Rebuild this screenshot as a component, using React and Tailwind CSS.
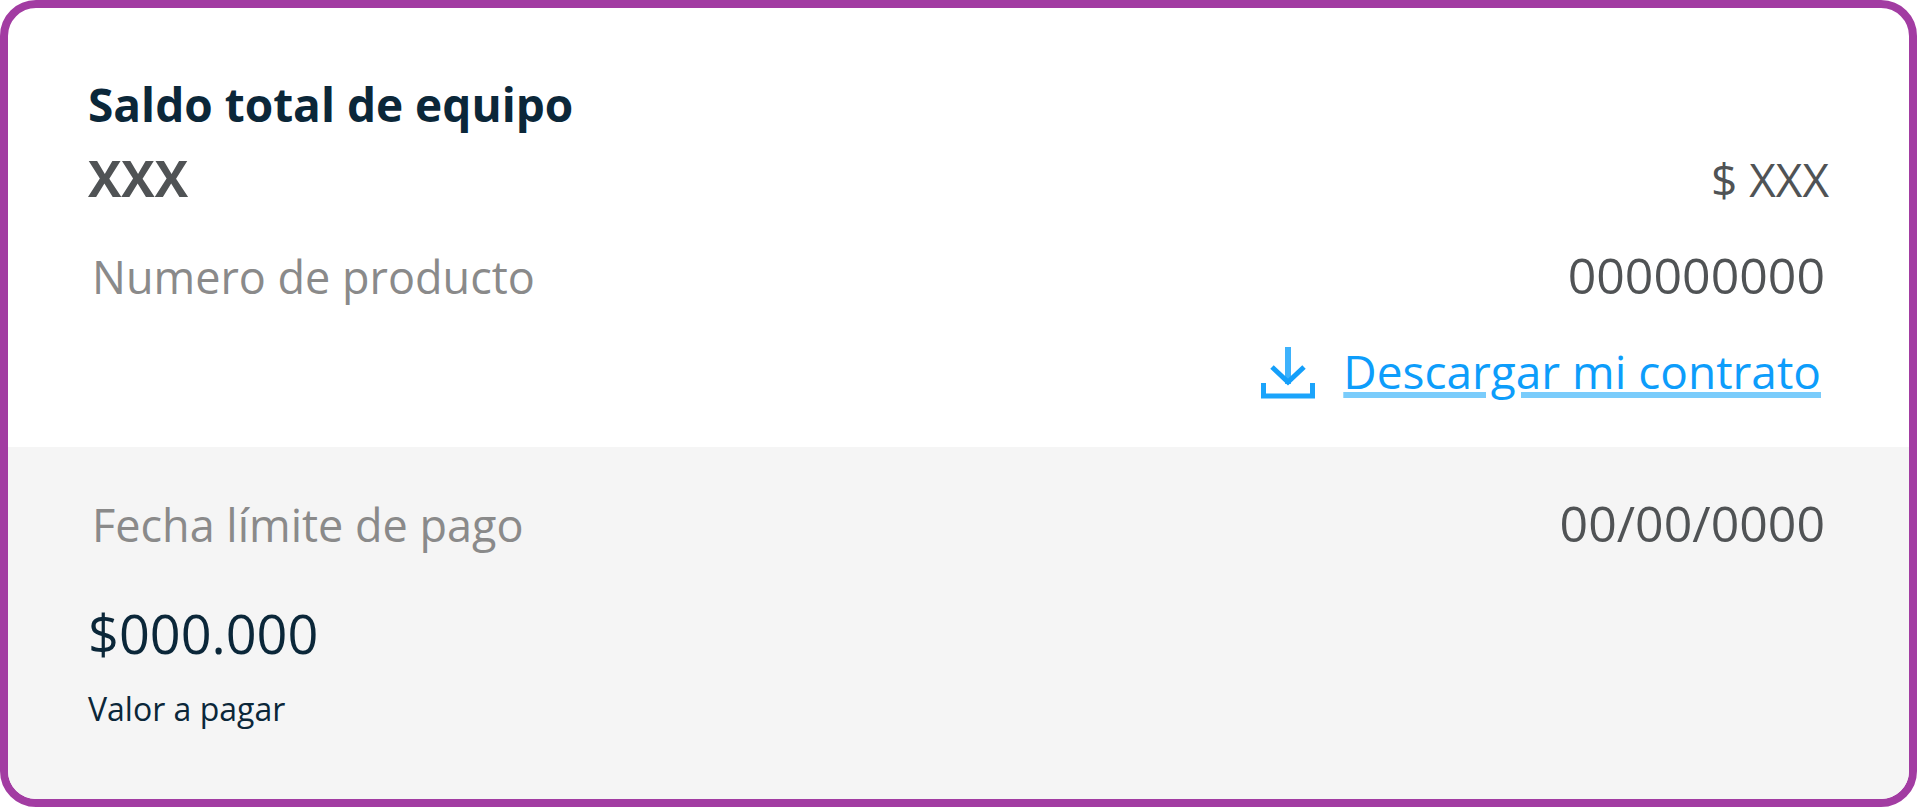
function DownloadIcon() {
  return (
    <svg viewBox="0 0 54 60" fill="none" aria-hidden="true" className="h-[60px] w-[54px] shrink-0">
      <path d="M27 6V43" stroke="#3db2fc" strokeWidth="6" />
      <path d="M11 26L27 41L43 26" stroke="#149ffa" strokeWidth="5" />
      <path d="M2.500 42V55H51.500V42" stroke="#1ba4fb" strokeWidth="5" />
    </svg>
  );
}

function Row({ label, value }) {
  return (
    <div className="flex items-baseline justify-between gap-8 px-1 text-[50px] leading-[64px]">
      <span className="text-[45px] text-[#8a8a8a]">{label}</span>
      <span className="text-[#505355]">{value}</span>
    </div>
  );
}

export default function App() {
  return (
    <main className="flex min-h-screen flex-col overflow-hidden rounded-[36px] border-8 border-[#a23ca2] bg-white font-['Open_Sans',sans-serif]">
      <section className="px-20 pt-16 pb-11">
        <h1 className="text-[46px] leading-[64px] font-bold text-[#0b2739]">Saldo total de equipo</h1>
        <div className="mt-2.5 flex items-baseline justify-between gap-8 text-[50px] leading-[64px] text-[#505355]">
          <span className="font-bold">XXX</span>
          <span className="text-[46px]">$ XXX</span>
        </div>
        <div className="mt-8">
          <Row label="Numero de producto" value="000000000" />
        </div>
        <div className="mt-7.5 flex justify-end pr-2">
          <a href="#contrato" className="flex items-center gap-7 text-[46px] leading-[64px] text-[#0d9dfb]">
            <DownloadIcon />
            <span className="underline decoration-[#7accfb] decoration-[6px] underline-offset-[3px]">
              Descargar mi contrato
            </span>
          </a>
        </div>
      </section>

      <section className="flex-1 bg-[#f5f5f5] px-20 pt-11 pb-16">
        <Row label="Fecha límite de pago" value="00/00/0000" />
        <p className="mt-11 text-[54px] leading-[64px] text-[#0b2739]">$000.000</p>
        <p className="mt-6 text-[32px] leading-[40px] text-[#0b2739]">Valor a pagar</p>
      </section>
    </main>
  );
}
